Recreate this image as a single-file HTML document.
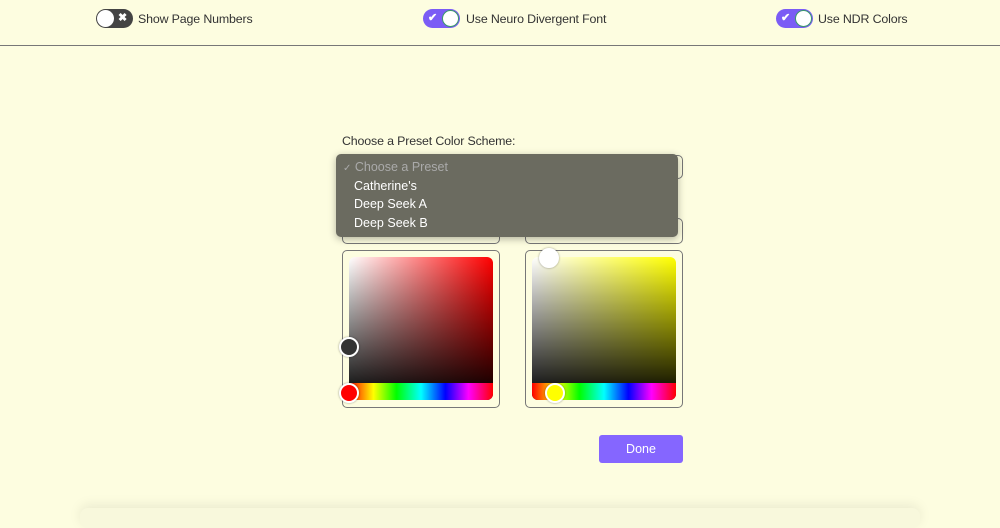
<!DOCTYPE html>
<html><head><style>
*{box-sizing:border-box;margin:0;padding:0}
body{width:1000px;height:511px;background:#fdfde0;font-family:"Liberation Sans",sans-serif;position:relative;overflow:hidden;color:#333}
.hdr{position:absolute;left:0;top:0;width:1000px;height:46px;border-bottom:1px solid #777}
.tg{position:absolute;top:9px;width:37px;height:19px;border-radius:10px}
.tg .k{position:absolute;top:1px;width:17px;height:17px;border-radius:50%;background:#fff}
.lbl{position:absolute;top:12px;font-size:12.4px;letter-spacing:-0.15px;color:#333}
.abs{position:absolute}
.box{position:absolute;border:1px solid #777;border-radius:5px}
.sv{position:absolute;left:6px;top:6px;width:144px;height:143px;border-radius:6px;overflow:hidden}
.hue{position:absolute;left:0;bottom:0;width:100%;height:17px;background:linear-gradient(90deg,#f00,#ff0 17%,#0f0 33%,#0ff 50%,#00f 67%,#f0f 83%,#f00)}
.dot{position:absolute;border-radius:50%;border:2px solid #fff;box-shadow:0 0 2px rgba(0,0,0,.4)}
</style></head><body>
<div class="hdr"></div>
<div class="tg" style="left:96px;background:#444"><div class="k" style="left:1px"></div><span class="abs" style="left:22px;top:0;color:#fff;font-size:11px;font-weight:bold;line-height:19px">✖</span></div>
<div class="lbl" style="left:138px">Show Page Numbers</div>
<div class="tg" style="left:423px;background:#7b5cf5"><span class="abs" style="left:5px;top:0;color:#fff;font-size:11px;line-height:19px;font-weight:bold">✔</span><div class="k" style="left:19px;border:1px solid #3a9a6a"></div></div>
<div class="lbl" style="left:466px">Use Neuro Divergent Font</div>
<div class="tg" style="left:776px;background:#7b5cf5"><span class="abs" style="left:5px;top:0;color:#fff;font-size:11px;line-height:19px;font-weight:bold">✔</span><div class="k" style="left:19px;border:1px solid #3a9a6a"></div></div>
<div class="lbl" style="left:818px">Use NDR Colors</div>

<div class="abs" style="left:342px;top:134px;font-size:12.4px;letter-spacing:-0.15px">Choose a Preset Color Scheme:</div>
<div class="box" style="left:342px;top:155px;width:341px;height:24px"></div>
<div class="box" style="left:342px;top:218px;width:158px;height:26px"></div>
<div class="box" style="left:525px;top:218px;width:158px;height:26px"></div>

<div class="box" style="left:342px;top:250px;width:158px;height:158px">
 <div class="sv" style="background:linear-gradient(to bottom,transparent,#000),linear-gradient(90deg,#fff,#f00)"><div class="hue"></div></div>
</div>
<div class="box" style="left:525px;top:250px;width:158px;height:158px">
 <div class="sv" style="background:linear-gradient(to bottom,transparent,#000),linear-gradient(90deg,#fff,#ff0)"><div class="hue"></div></div>
</div>
<div class="dot" style="left:339px;top:337px;width:20px;height:20px;background:#333"></div>
<div class="dot" style="left:339px;top:383px;width:20px;height:20px;background:#f00"></div>
<div class="dot" style="left:539px;top:248px;width:20px;height:20px;background:#fff"></div>
<div class="dot" style="left:545px;top:383px;width:20px;height:20px;background:#ff0"></div>

<div class="abs" style="left:336px;top:154px;width:342px;height:83px;background:#6b6b60;border-radius:5px;box-shadow:0 2px 8px rgba(0,0,0,.3);font-size:12.5px;color:#fff">
 <div class="abs" style="left:7px;top:6px;color:#aaa"><span style="font-size:10px">✓</span> Choose a Preset</div>
 <div class="abs" style="left:18px;top:25px">Catherine's</div>
 <div class="abs" style="left:18px;top:43px">Deep Seek A</div>
 <div class="abs" style="left:18px;top:62px">Deep Seek B</div>
</div>

<div class="abs" style="left:599px;top:435px;width:84px;height:28px;background:#8566ff;border-radius:3px;color:#fff;font-size:12.5px;text-align:center;line-height:28px">Done</div>
<div class="abs" style="left:80px;top:508px;width:840px;height:20px;box-shadow:0 -3px 12px rgba(0,0,0,.08);border-radius:8px;background:#f8f8dc"></div>
</body></html>
